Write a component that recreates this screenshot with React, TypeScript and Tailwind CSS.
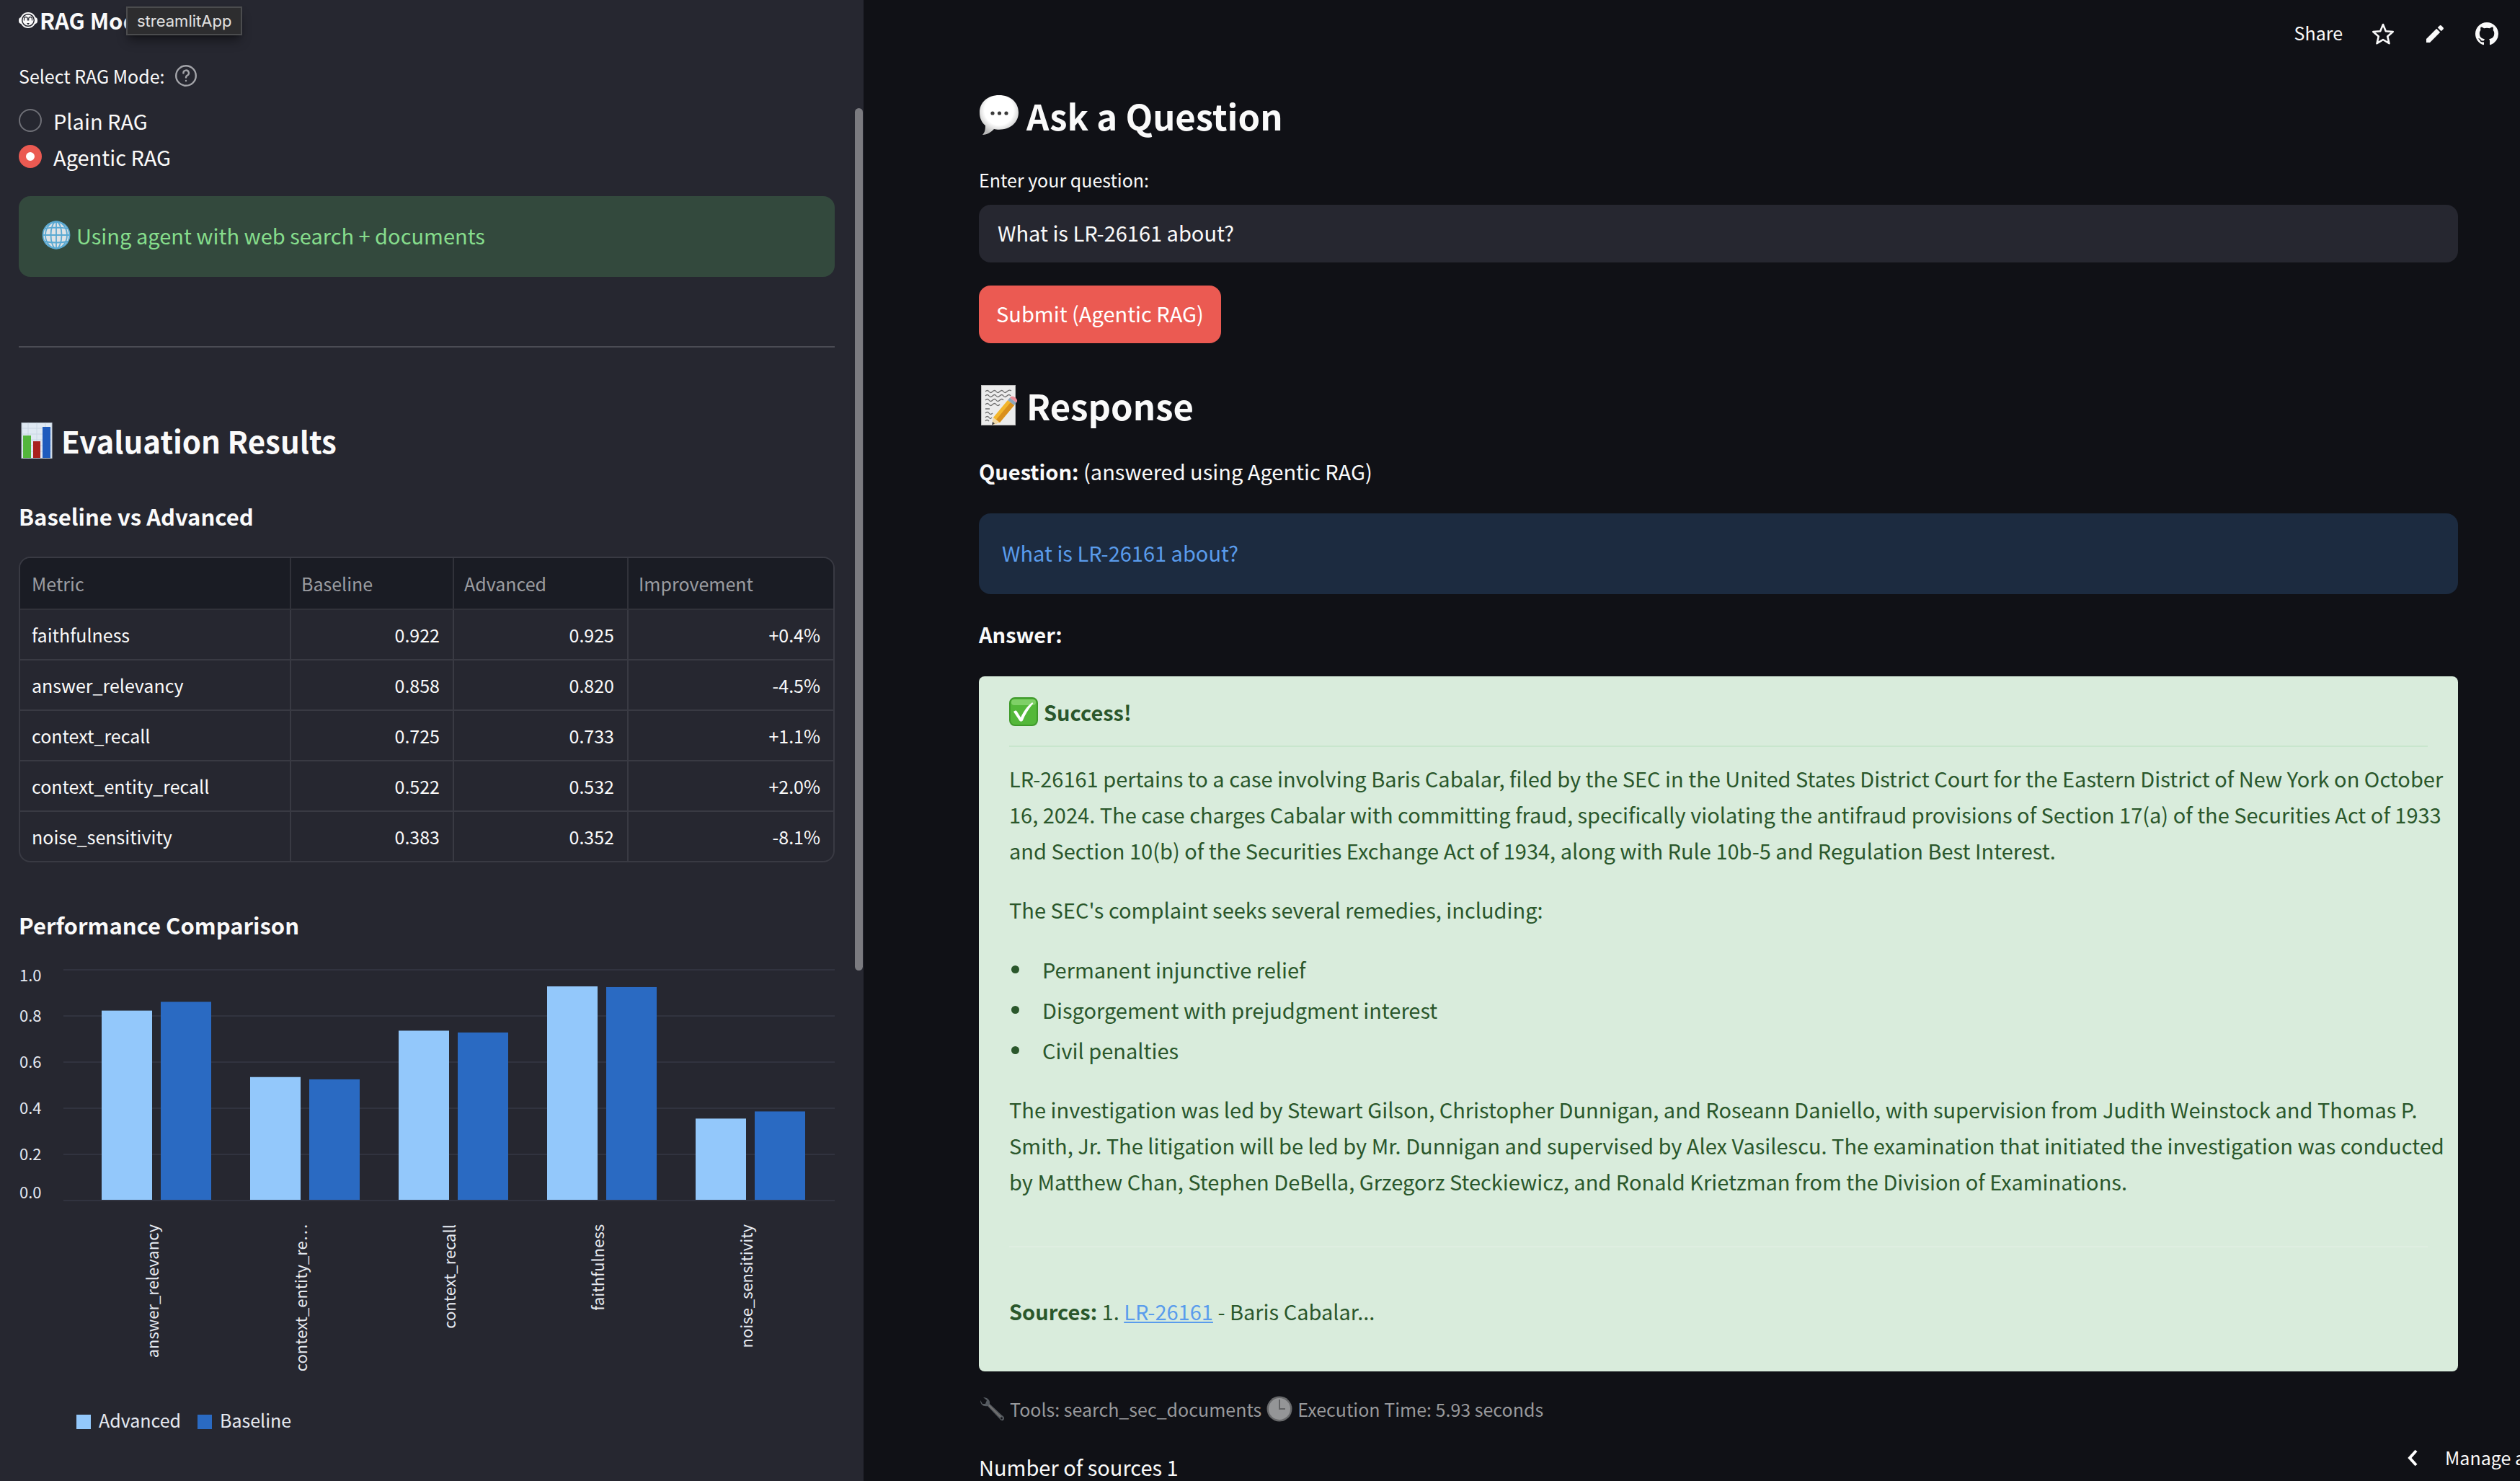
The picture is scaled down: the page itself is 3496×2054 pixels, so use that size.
import type { ReactNode } from "react";

type Metric = { name: string; label: string; baseline: number; advanced: number; change: string };

const metrics: Metric[] = [
  { name: "faithfulness", label: "faithfulness", baseline: 0.922, advanced: 0.925, change: "+0.4%" },
  { name: "answer_relevancy", label: "answer_relevancy", baseline: 0.858, advanced: 0.82, change: "-4.5%" },
  { name: "context_recall", label: "context_recall", baseline: 0.725, advanced: 0.733, change: "+1.1%" },
  { name: "context_entity_recall", label: "context_entity_re…", baseline: 0.522, advanced: 0.532, change: "+2.0%" },
  { name: "noise_sensitivity", label: "noise_sensitivity", baseline: 0.383, advanced: 0.352, change: "-8.1%" },
];

function FaceIcon() {
  return (
    <svg viewBox="0 0 26 24" className="h-6 w-[26px] shrink-0" aria-hidden="true">
      <rect x="0" y="8" width="26" height="9" rx="4" fill="#fafafa" />
      <circle cx="13" cy="12" r="11" fill="#fafafa" />
      <circle cx="13" cy="12" r="8.3" fill="none" stroke="#262730" strokeWidth="1.5" />
      <path d="M7.500 12.500V10a2.400 2.400 0 0 1 4.800 0v2.500M13.700 12.500V10a2.400 2.400 0 0 1 4.800 0v2.500" fill="none" stroke="#262730" strokeWidth="1.2" />
      <path d="M11 16h4l-2 2.400Z" fill="#262730" />
    </svg>
  );
}

function HelpIcon() {
  return (
    <svg viewBox="0 0 24 24" className="size-9" fill="none" stroke="#a3a4a9" strokeWidth="1.6" strokeLinecap="round" aria-hidden="true">
      <circle cx="12" cy="12" r="9.2" />
      <path d="M9.6 9.6a2.5 2.5 0 1 1 3.6 2.2c-.8.4-1.2.9-1.2 1.8" />
      <path d="M12 16.6v.1" />
    </svg>
  );
}

function GlobeIcon() {
  return (
    <svg viewBox="0 0 40 40" className="size-10 shrink-0" aria-hidden="true">
      <circle cx="20" cy="20" r="19" fill="#dfe2e5" />
      <g fill="none" stroke="#5aa9d2" strokeWidth="1.800">
        <circle cx="20" cy="20" r="18.500" />
        <ellipse cx="20" cy="20" rx="15" ry="18.500" />
        <ellipse cx="20" cy="20" rx="7.500" ry="18.500" />
        <path d="M20 1v38M1 20h38M4 11q16 -3 32 0M4 29q16 3 32 0" />
      </g>
    </svg>
  );
}

function ChartIcon() {
  return (
    <svg viewBox="0 0 44 50" className="h-[50px] w-11 shrink-0" aria-hidden="true">
      <rect x="1" y="0.500" width="42" height="49" fill="#dfe9f3" stroke="#b8c4d0" />
      <path d="M1 8h42M1 16h42M1 24h42M1 32h42M1 40h42M10 0v50M22 0v50M34 0v50" stroke="#c9d6e4" strokeWidth="1" />
      <rect x="3" y="18" width="11" height="31" fill="#53b63c" />
      <rect x="17" y="26" width="10" height="23" fill="#a9221d" />
      <rect x="30" y="6" width="11" height="43" fill="#1f5bbd" />
    </svg>
  );
}

function SpeechIcon() {
  return (
    <svg viewBox="0 0 56 58" className="h-[58px] w-14 shrink-0" aria-hidden="true">
      <defs>
        <radialGradient id="bubble" cx="50%" cy="38%" r="62%">
          <stop offset="0.600" stopColor="#ffffff" />
          <stop offset="1" stopColor="#b9b9b9" />
        </radialGradient>
      </defs>
      <path d="M28 1C12 1 1 11 1 25c0 8 3 14 8 18 0 6-1 10-4 13 7 0 12-4 16-8 2 .5 4 .7 7 .7 16 0 27-10 27-23.700S44 1 28 1Z" fill="url(#bubble)" />
      <circle cx="19" cy="26" r="2.600" fill="#3a3a3a" />
      <circle cx="28.500" cy="26" r="2.600" fill="#3a3a3a" />
      <circle cx="38" cy="26" r="2.600" fill="#3a3a3a" />
    </svg>
  );
}

function MemoIcon() {
  return (
    <svg viewBox="0 0 56 58" className="h-[58px] w-14 shrink-0" aria-hidden="true">
      <rect x="3.500" y="1.500" width="47" height="55" fill="#ececec" stroke="#bdbdbd" />
      <path
        d="M9 10q3-3 5 0t5 0 5 0 5 0 5 0 5 0 6-1M9 16q3-3 5 0t5 0 5 0 5 0 5 0 5 0 5 0M9 22q3-3 5 0t5 0 5 0 5 0 5 0M9 28q3-3 5 0t5 0 5 0 5 0M9 34h6M9 40q3-3 5 0t5 0M9 46q3-3 5 0t4 0M9 51q2-3 5 0"
        fill="none"
        stroke="#6d6d6d"
        strokeWidth="1.300"
      />
      <path d="M20 46 40 22l9 7-20 24-10 3Z" fill="#f3b62c" />
      <path d="m24 49 20-24 5 4-20 24Z" fill="#d98f1c" />
      <path d="m20 46 9 7-10 3Z" fill="#f0d9a8" />
      <path d="m19 52 3 2.500-4 2Z" fill="#3b3b3b" />
      <path d="m40 22 3-3.500 9 7-3 3.500Z" fill="#8fa6b8" />
      <path d="M43 18.500c2-2.500 5-2 7.500 0s3.500 4.500 1.500 7Z" fill="#ee8f99" />
    </svg>
  );
}

function CheckIcon() {
  return (
    <svg viewBox="0 0 40 40" className="size-10 shrink-0" aria-hidden="true">
      <rect x="1" y="1" width="38" height="38" rx="7" fill="#54b83a" stroke="#3f9a2b" strokeWidth="2" />
      <rect x="3" y="3" width="34" height="8" rx="4" fill="#7fd067" />
      <path d="M6 20c2-2 4-2 5 0l5 8C20 20 25 12 31 8c1-1 3 0 2 1-6 7-11 15-14 23-1 2-4 2-5 0Z" fill="#fff" />
    </svg>
  );
}

function WrenchIcon() {
  return (
    <svg viewBox="0 0 36 36" className="size-9 shrink-0" aria-hidden="true">
      <path d="M2 6c0 6 4 9 10 8l17 18c2 3 6 3 6-1 0-2-1-3-3-4L15 11c1-5-3-9-9-9l5 4-2 5-4 0Z" fill="#565b61" />
      <path d="M14 13 30 29" stroke="#7a7672" strokeWidth="1.500" />
      <circle cx="31.500" cy="31" r="1.400" fill="#101116" />
    </svg>
  );
}

function ClockIcon() {
  return (
    <svg viewBox="0 0 36 36" className="size-9 shrink-0" aria-hidden="true">
      <circle cx="18" cy="18" r="17.500" fill="#68696b" />
      <circle cx="18" cy="18" r="15" fill="#949597" />
      <path d="M18 5v13h8" fill="none" stroke="#616264" strokeWidth="2" />
    </svg>
  );
}

function StarIcon() {
  return (
    <svg viewBox="0 0 30 30" className="size-[30px]" aria-hidden="true">
      <path d="m15 2 3.800 9.200 9.900.800-7.500 6.500 2.300 9.700L15 23l-8.500 5.200 2.300-9.700L1.300 12l9.900-.800Z" fill="none" stroke="#fafafa" strokeWidth="2.600" strokeLinejoin="round" />
    </svg>
  );
}

function PencilIcon() {
  return (
    <svg viewBox="0 0 24 24" className="size-6" fill="#fafafa" aria-hidden="true">
      <path d="M0 19 14.200 4.800l5 5L5 24H0Z" />
      <path d="m15.700 3.300 2.600-2.600c.9-.9 1.900-.9 2.800 0l2.200 2.200c.9.9.9 1.900 0 2.800l-2.600 2.600Z" />
    </svg>
  );
}

function GithubIcon() {
  return (
    <svg viewBox="0 0 16 16" className="size-8" fill="#fafafa" aria-hidden="true">
      <path d="M8 0C3.580 0 0 3.580 0 8c0 3.540 2.290 6.530 5.470 7.590.4.070.55-.17.55-.38 0-.19-.01-.82-.01-1.490-2.010.37-2.530-.49-2.690-.94-.09-.23-.48-.94-.82-1.130-.28-.15-.68-.52-.01-.53.63-.01 1.080.58 1.230.82.72 1.210 1.870.87 2.330.66.07-.52.28-.87.51-1.070-1.780-.2-3.640-.89-3.640-3.950 0-.87.31-1.590.82-2.150-.08-.2-.36-1.020.08-2.120 0 0 .67-.21 2.200.82.640-.18 1.320-.27 2-.27s1.360.09 2 .27c1.530-1.040 2.200-.82 2.200-.82.44 1.100.16 1.920.08 2.120.51.56.82 1.270.82 2.150 0 3.070-1.870 3.750-3.650 3.950.29.25.54.73.54 1.480 0 1.070-.01 1.930-.01 2.200 0 .21.15.46.55.38A8.010 8.010 0 0 0 16 8c0-4.420-3.580-8-8-8Z" />
    </svg>
  );
}

function RadioOption({ label, checked }: { label: string; checked?: boolean }) {
  return (
    <label className="flex h-[50px] items-center gap-4 text-[29px] leading-[50px]">
      <input
        type="radio"
        name="rag-mode"
        defaultChecked={checked}
        className="size-8 appearance-none rounded-full border-2 border-[#6f7077] bg-[#262730] checked:border-[10px] checked:border-[#eb5a52] checked:bg-white"
      />
      {label}
    </label>
  );
}

function Heading({ icon, children }: { icon: ReactNode; children: ReactNode }) {
  return (
    <h2 className="flex items-center gap-[10px] text-[49px] leading-[72px] font-bold">
      {icon}
      {children}
    </h2>
  );
}

function ResultsTable() {
  return (
    <div className="mt-8 overflow-hidden rounded-2xl border-2 border-[#393a43]">
      <table className="w-full table-fixed border-separate border-spacing-0 text-[25px] leading-10">
        <colgroup>
          <col className="w-[376px]" />
          <col className="w-[226px]" />
          <col className="w-[242px]" />
          <col />
        </colgroup>
        <thead>
          <tr className="bg-[#1a1c24] text-left text-[#9b9ca1]">
            {["Metric", "Baseline", "Advanced", "Improvement"].map((h) => (
              <th key={h} className="h-[72px] border-r-2 border-b-2 border-[#31323a] px-[14px] py-0 font-normal first:pl-4 last:border-r-0">
                {h}
              </th>
            ))}
          </tr>
        </thead>
        <tbody className="[&>tr:last-child>td]:h-[68px] [&>tr:last-child>td]:border-b-0">
          {metrics.map((m) => (
            <tr key={m.name}>
              <td className="h-[70px] border-r-2 border-b-2 border-[#393a43] px-4 py-0">{m.name}</td>
              <td className="border-r-2 border-b-2 border-[#393a43] px-[18px] py-0 text-right">{m.baseline.toFixed(3)}</td>
              <td className="border-r-2 border-b-2 border-[#393a43] px-[18px] py-0 text-right">{m.advanced.toFixed(3)}</td>
              <td className="border-b-2 border-[#393a43] px-[18px] py-0 text-right">{m.change}</td>
            </tr>
          ))}
        </tbody>
      </table>
    </div>
  );
}

const ticks = [
  { text: "1.0", line: 15, base: 31 },
  { text: "0.8", line: 79, base: 87 },
  { text: "0.6", line: 143, base: 151 },
  { text: "0.4", line: 207, base: 215 },
  { text: "0.2", line: 271, base: 279 },
  { text: "0.0", line: 335, base: 332 },
];

function PerformanceChart() {
  const sorted = [...metrics].sort((a, b) => (a.name < b.name ? -1 : 1));
  return (
    <svg viewBox="0 0 1132 680" className="mt-[23px] block w-full" role="img" aria-label="Performance comparison of Advanced and Baseline">
      {ticks.map((t) => (
        <g key={t.text}>
          <path d={`M62 ${t.line}H1132`} stroke="#31333f" strokeWidth="2" />
          <text x="1" y={t.base} fontSize="22" fill="#e6eaf1">
            {t.text}
          </text>
        </g>
      ))}
      {sorted.map((m, i) => {
        const x = 115 + i * 206;
        return (
          <g key={m.name}>
            <rect x={x} y={334 - m.advanced * 320} width="70" height={m.advanced * 320} fill="#93c8fb" />
            <rect x={x + 82} y={334 - m.baseline * 320} width="70" height={m.baseline * 320} fill="#2a6ac2" />
            <text transform={`translate(${x + 79} 368) rotate(-90)`} textAnchor="end" fontSize="22" fill="#e6eaf1">
              {m.label}
            </text>
          </g>
        );
      })}
      <rect x="80" y="632" width="20" height="20" fill="#93c8fb" />
      <text x="111" y="650" fontSize="25" fill="#e6eaf1">
        Advanced
      </text>
      <rect x="248" y="632" width="20" height="20" fill="#2a6ac2" />
      <text x="279" y="650" fontSize="25" fill="#e6eaf1">
        Baseline
      </text>
    </svg>
  );
}

function Sidebar() {
  return (
    <aside className="relative w-[1198px] shrink-0 overflow-hidden bg-[#262730] pt-2 pr-10 pl-[26px]">
      <h3 className="flex items-center gap-[3px] text-[31px] leading-10 font-bold">
        <FaceIcon />
        RAG Mode
      </h3>
      <div role="tooltip" className="absolute top-[9px] left-[175px] flex h-10 items-center border-2 border-[#4b4c4e] bg-[#2d2d2f] px-[13px] font-[Inter,sans-serif] text-[22px] text-[#e2e2e2] shadow-lg shadow-black/40">
        streamlitApp
      </div>

      <div role="radiogroup" aria-labelledby="rag-mode-label" className="pt-[37px]">
        <div className="flex h-10 items-center gap-3 text-[25px] leading-10">
          <span id="rag-mode-label">Select RAG Mode:</span>
          <button type="button" aria-label="Help">
            <HelpIcon />
          </button>
        </div>
        <div className="mt-[17px]">
          <RadioOption label="Plain RAG" />
          <RadioOption label="Agentic RAG" checked />
        </div>
      </div>

      <div className="mt-[30px] flex items-center gap-2 rounded-2xl bg-[#33493d] px-8 pt-[30px] pb-[34px] text-[29px] leading-[48px] text-[#86dd8c]">
        <GlobeIcon />
        Using agent with web search + documents
      </div>

      <hr className="mt-24 h-[2px] border-0 bg-[#4b4c54]" />

      <h2 className="mt-[99px] flex items-center gap-3 pl-[3px] text-[42px] leading-[60px] font-bold">
        <ChartIcon />
        Evaluation Results
      </h2>
      <h3 className="mt-[51px] text-[31px] leading-[48px] font-bold">Baseline vs Advanced</h3>
      <ResultsTable />
      <h3 className="mt-[63px] text-[31px] leading-[48px] font-bold">Performance Comparison</h3>
      <PerformanceChart />

      <div className="absolute top-[150px] right-[1px] h-[1196px] w-[11px] rounded-full bg-[#7b7b80]" />
    </aside>
  );
}

function Answer() {
  return (
    <article className="mt-[35px] rounded-lg bg-[#d9ecdc] px-[42px] pt-[25px] pb-[59px] text-[29px] leading-[50px] text-[#2a572b]">
      <h4 className="flex items-center gap-2 leading-[48px] font-bold">
        <CheckIcon />
        Success!
      </h4>
      <hr className="mt-[23px] h-[2px] border-0 bg-[#c8e6cd]" />
      <p className="-mr-6 mt-[18px]">
        LR-26161 pertains to a case involving Baris Cabalar, filed by the SEC in the United States District Court for the Eastern District of New York on October 16, 2024. The case charges Cabalar with committing fraud, specifically violating the antifraud provisions of Section 17(a) of the Securities Act of 1933 and Section 10(b) of the Securities Exchange Act of 1934, along with Rule 10b-5 and Regulation Best Interest.
      </p>
      <p className="mt-8">The SEC's complaint seeks several remedies, including:</p>
      <ul className="mt-[30px] leading-[56px]">
        {["Permanent injunctive relief", "Disgorgement with prejudgment interest", "Civil penalties"].map((item) => (
          <li key={item} className="flex items-center gap-8 pl-[3px]">
            <span className="size-[11px] rounded-full bg-[#2a572b]" />
            {item}
          </li>
        ))}
      </ul>
      <p className="-mr-6 mt-[29px]">
        The investigation was led by Stewart Gilson, Christopher Dunnigan, and Roseann Daniello, with supervision from Judith Weinstock and Thomas P. Smith, Jr. The litigation will be led by Mr. Dunnigan and supervised by Alex Vasilescu. The examination that initiated the investigation was conducted by Matthew Chan, Stephen DeBella, Grzegorz Steckiewicz, and Ronald Krietzman from the Division of Examinations.
      </p>
      <hr className="mt-[65px] h-[2px] border-0 bg-[#dfeee1]" />
      <p className="mt-[63px]">
        <strong>Sources:</strong> 1.{" "}
        <a href="#lr-26161" className="text-[#5a9cec] underline">
          LR-26161
        </a>{" "}
        - Baris Cabalar...
      </p>
    </article>
  );
}

export default function App() {
  return (
    <div className="flex h-screen overflow-hidden bg-[#101116] font-['Noto_Sans_CJK_SC',sans-serif] text-[#fafafa]">
      <Sidebar />
      <main className="relative min-w-0 flex-1 overflow-hidden">
        <header className="flex h-[94px] items-center justify-end pr-[30px]">
          <button type="button" className="mr-[41px] pb-1 text-[25px] leading-10">
            Share
          </button>
          <button type="button" aria-label="Favorite" className="mr-[45px]">
            <StarIcon />
          </button>
          <button type="button" aria-label="Edit" className="mr-11">
            <PencilIcon />
          </button>
          <button type="button" aria-label="View on GitHub">
            <GithubIcon />
          </button>
        </header>

        <div className="pt-[30px] pr-[86px] pl-40">
          <Heading icon={<SpeechIcon />}>Ask a Question</Heading>
          <label htmlFor="question" className="mt-[33px] block text-[25px] leading-10">
            Enter your question:
          </label>
          <input
            id="question"
            type="text"
            defaultValue="What is LR-26161 about?"
            className="mt-[15px] block h-20 w-full rounded-2xl bg-[#262730] px-[26px] pb-[5px] text-[29px]"
          />
          <button type="button" className="mt-8 block h-20 rounded-2xl bg-[#eb5a52] px-6 pb-[2px] text-[29px] text-white">
            Submit (Agentic RAG)
          </button>

          <div className="mt-[50px]">
            <Heading icon={<MemoIcon />}>Response</Heading>
          </div>
          <p className="mt-[31px] text-[29px] leading-[48px]">
            <strong>Question:</strong> (answered using Agentic RAG)
          </p>
          <div className="mt-[35px] rounded-2xl bg-[#1c2b40] px-8 pt-[30px] pb-[34px] text-[29px] leading-[48px] text-[#5a9cec]">
            What is LR-26161 about?
          </div>
          <p className="mt-[31px] text-[29px] leading-[48px] font-bold">Answer:</p>
          <Answer />
          <p className="mt-8 flex items-center gap-[7px] text-[25px] leading-10 text-[#98999c]">
            <WrenchIcon />
            Tools: search_sec_documents
            <ClockIcon />
            Execution Time: 5.93 seconds
          </p>
          <p className="mt-9 text-[29px] leading-[48px]">Number of sources 1</p>
        </div>

        <button type="button" className="absolute right-0 bottom-0 flex h-16 w-40 items-center gap-[38px] overflow-hidden bg-[#101116] pl-1 text-[25px] whitespace-nowrap">
          <svg viewBox="0 0 14 24" className="h-6 w-3.5 shrink-0" aria-hidden="true">
            <path d="M12 2 3 12l9 10" fill="none" stroke="#fff" strokeWidth="4" />
          </svg>
          Manage app
        </button>
      </main>
    </div>
  );
}
